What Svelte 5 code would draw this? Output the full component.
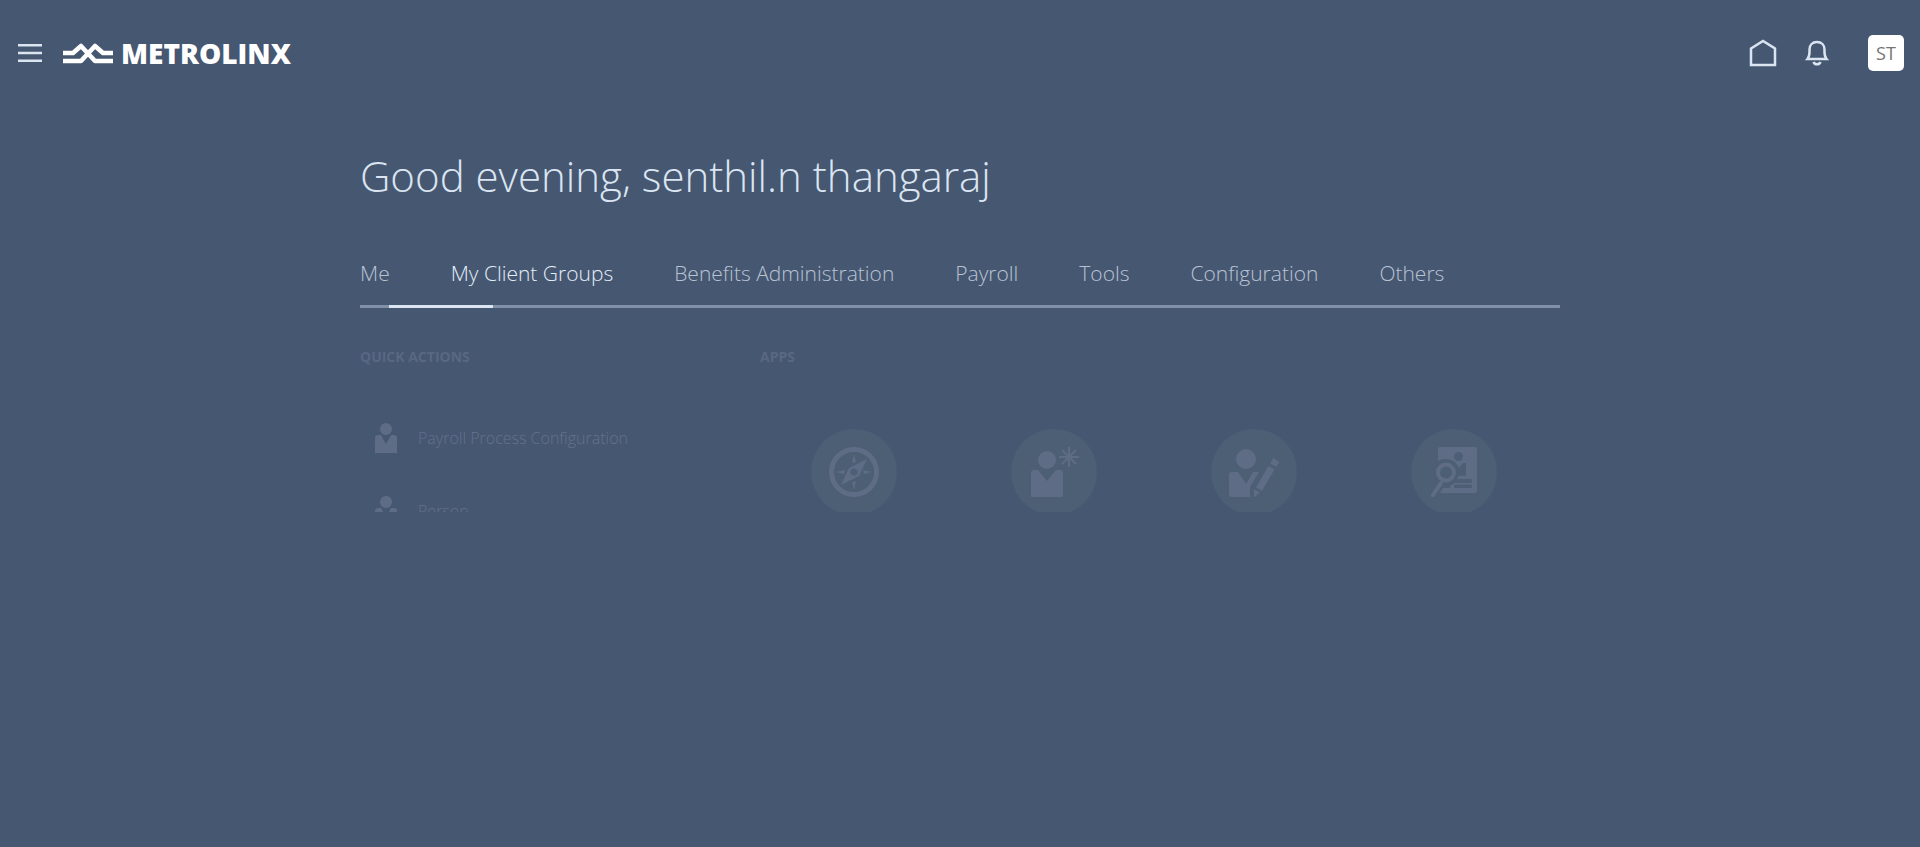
<script>
  const tabs = ['Me', 'My Client Groups', 'Benefits Administration', 'Payroll', 'Tools', 'Configuration', 'Others'];
  let active = $state('My Client Groups');
  const actions = ['Payroll Process Configuration', 'Person'];
  const apps = ['compass', 'new', 'edit', 'search'];
</script>

<div class="page">
  <header>
    <button class="menu" aria-label="Navigator">
      <svg width="24" height="18" viewBox="0 0 24 18"><path d="M0 1.300h24M0 9h24M0 16.700h24" stroke="#dbe5f1" stroke-width="2.500" /></svg>
    </button>
    <a class="logo" href="#home">
      <svg width="50" height="21" viewBox="0 0 50 21" fill="none" stroke="#fff" stroke-width="4.600" stroke-linejoin="round">
        <path d="M0 10H10L18 3L32 18H50" />
        <path d="M0 18H18L32 3L40 10H50" />
      </svg>
      <span>METROLINX</span>
    </a>
    <nav class="tools">
      <a href="#home" aria-label="Home">
        <svg width="28" height="28" viewBox="0 0 28 28" fill="none" stroke="#dbe5f1" stroke-width="2.500"><path d="M2 9.500L14 2L26 9.500V26H2Z" /></svg>
      </a>
      <button aria-label="Notifications">
        <svg width="24" height="26" viewBox="0 0 24 26" fill="none" stroke="#dbe5f1" stroke-width="2.500">
          <path d="M2.500 19C5 16 4.500 13 4.500 9.500C4.500 5 7.500 2 12 2S19.500 5 19.500 9.500C19.500 13 19 16 21.500 19Z" />
          <path d="M8.500 22C9.500 25 14.500 25 15.500 22" />
        </svg>
      </button>
      <button class="avatar">ST</button>
    </nav>
  </header>

  <main>
    <h1>Good evening, senthil.n thangaraj</h1>
    <div class="tabs" role="tablist">
      {#each tabs as tab}
        <button role="tab" aria-selected={active === tab} class:active={active === tab} onclick={() => (active = tab)}>{tab}</button>
      {/each}
    </div>
    <div class="rule"><div class="marker"></div></div>

    <div class="panel">
      <section class="quick">
        <h2>QUICK ACTIONS</h2>
        <ul>
          {#each actions as action}
            <li>
              <a href="#action">
                <svg width="22" height="30" viewBox="0 0 22 30"><circle cx="11" cy="6" r="6" /><path d="M0 15Q0 12 3 12H6L11 21L16 12H19Q22 12 22 15V30H0Z" /></svg>
                <span>{action}</span>
              </a>
            </li>
          {/each}
        </ul>
      </section>
      <section class="apps">
        <h2>APPS</h2>
        <div class="grid">
          {#each apps as app}
            <a href="#app" aria-label={app}>
              <svg width="86" height="86" viewBox="0 0 86 86">
                {#if app === 'compass'}
                  <circle cx="43" cy="43" r="22.500" fill="none" stroke="#5f6c85" stroke-width="5" />
                  <path fill-rule="evenodd" d="M56 30L48 47L30 56L38 39ZM43 39.500A3.500 3.500 0 1 0 43 46.500A3.500 3.500 0 1 0 43 39.500Z" />
                  <path d="M43 25L45 33L41 34ZM43 61L45 52L41 53ZM25 43L34 41L33 45ZM61 43L52 41L53 45Z" />
                {:else if app === 'new'}
                  <circle cx="36" cy="31" r="9" />
                  <path d="M20 44Q20 41 23 41H27L36 52L45 41H49Q52 41 52 44V67Q52 68 51 68H21Q20 68 20 67Z" />
                  <path d="M58 18V38M48 28H68M51 21L65 35M65 21L51 35" stroke="#5f6c85" stroke-width="2" />
                {:else if app === 'edit'}
                  <circle cx="35" cy="30" r="10" />
                  <path d="M18 46Q18 43 21 43H27L35 55L42 43H48L39 58V68H21Q18 68 18 65Z" />
                  <path d="M57.500 37L63.500 40.500L51 62L45 58.500ZM62 29L68.500 33L65 38L59.500 34.500ZM43 60L49 63.500L43.500 68H43Z" />
                {:else}
                  <path fill-rule="evenodd" d="M29 18H64Q66 18 66 20V62Q66 64 64 64H29L32 59H39V57L44 54H60Q61 54 61 52Q61 50 60 50H46L48 47H55V34H52L48 39Q44 30 35 30Q30 30 27 32V20Q27 18 29 18ZM47.500 23A4.500 4.500 0 1 0 47.500 32A4.500 4.500 0 1 0 47.500 23ZM44 55.500Q43 55.500 43 57.500Q43 59 44 59H60Q61 59 61 57.500Q61 55.500 60 55.500Z" />
                  <circle cx="35" cy="43.500" r="8" fill="none" stroke="#5f6c85" stroke-width="4" />
                  <path d="M30 54L22 66" stroke="#5f6c85" stroke-width="4" stroke-linecap="round" />
                {/if}
              </svg>
            </a>
          {/each}
        </div>
      </section>
    </div>
  </main>
</div>

<style>
  :global(body) { margin: 0; background: #465772; }
  .page { min-height: 100vh; font-family: "Open Sans", sans-serif; color: #dbe5f1; }
  button { border: 0; padding: 0; background: none; font: inherit; color: inherit; cursor: pointer; }
  a { color: inherit; text-decoration: none; }
  svg { display: block; }
  header { display: flex; align-items: center; height: 106px; padding: 0 16px 0 18px; }
  .logo { display: flex; align-items: center; gap: 8px; margin-left: 21px; color: #fff; font: 800 28px/32px "Open Sans", sans-serif; }
  .tools { display: flex; align-items: center; margin-left: auto; gap: 28px; }
  .avatar { width: 36px; height: 36px; margin-left: 11px; border-radius: 5px; background: #fff; color: #757575; font-size: 18px; line-height: 34px; }
  main { max-width: 1200px; margin: 0 auto; }
  h1 { margin: 0; padding-top: 36px; font-weight: 300; font-size: 42px; line-height: 68px; }
  .tabs { display: flex; gap: 61px; padding-top: 45px; }
  .tabs button { font-weight: 300; font-size: 21px; line-height: 36px; color: #b8c3d2; white-space: nowrap; }
  .tabs .active { color: #e4edf7; }
  .rule { height: 3px; margin-top: 14px; background: #8090a8; }
  .marker { width: 104px; height: 3px; margin-left: 29px; background: #dbe5f1; }
  .panel { display: grid; grid-template-columns: 1fr 2fr; height: 204px; overflow: hidden; }
  h2 { margin: 0; padding-top: 38px; font-size: 14px; line-height: 22px; font-weight: 700; color: #586882; }
  ul { list-style: none; margin: 0; padding: 33px 0 0; }
  li a { display: flex; align-items: center; gap: 21px; height: 73px; padding-left: 15px; font-weight: 300; font-size: 16px; color: #63728b; }
  li svg, .grid svg { fill: #5f6c85; }
  .grid { display: grid; grid-template-columns: repeat(4, 1fr); padding-top: 61px; margin: 0 6px 0 -6px; justify-items: center; }
  .grid a { border-radius: 50%; background: #4d5f75; }
</style>
